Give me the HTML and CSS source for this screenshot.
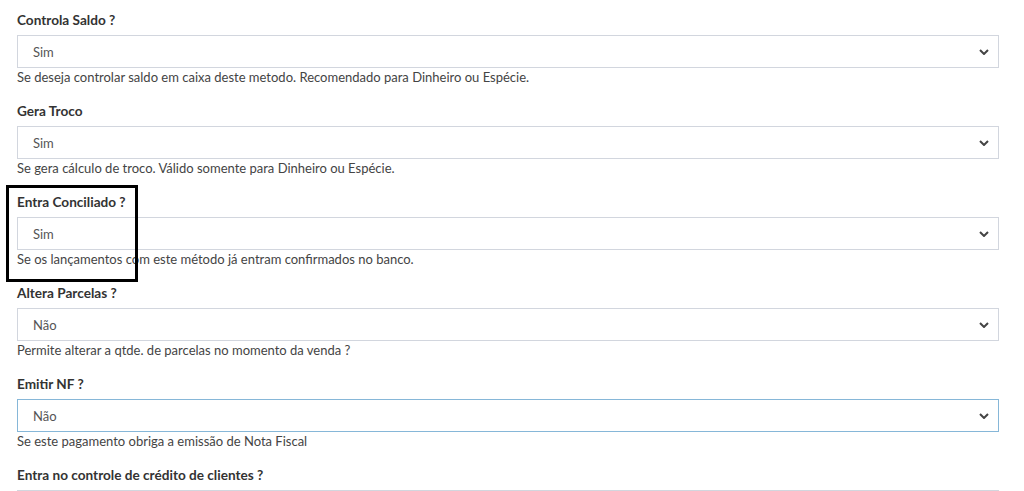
FILE: index.html
```html
<!DOCTYPE html>
<html lang="pt">
<head>
<meta charset="utf-8">
<title>Formulário</title>
<link rel="stylesheet" href="styles.css">
</head>
<body>
<div class="form">
  <div class="group">
    <label class="lbl">Controla Saldo ?</label>
    <div class="select"><span>Sim</span><svg class="chev" viewBox="0 0 10 6" width="10" height="6"><path d="M1 1 L5 5 L9 1" fill="none" stroke="#444" stroke-width="2"/></svg></div>
    <div class="help">Se deseja controlar saldo em caixa deste metodo. Recomendado para Dinheiro ou Espécie.</div>
  </div>
  <div class="group">
    <label class="lbl">Gera Troco</label>
    <div class="select"><span>Sim</span><svg class="chev" viewBox="0 0 10 6" width="10" height="6"><path d="M1 1 L5 5 L9 1" fill="none" stroke="#444" stroke-width="2"/></svg></div>
    <div class="help">Se gera cálculo de troco. Válido somente para Dinheiro ou Espécie.</div>
  </div>
  <div class="group">
    <label class="lbl">Entra Conciliado ?</label>
    <div class="select"><span>Sim</span><svg class="chev" viewBox="0 0 10 6" width="10" height="6"><path d="M1 1 L5 5 L9 1" fill="none" stroke="#444" stroke-width="2"/></svg></div>
    <div class="help">Se os lançamentos com este método já entram confirmados no banco.</div>
    <div class="highlight"></div>
  </div>
  <div class="group">
    <label class="lbl">Altera Parcelas ?</label>
    <div class="select"><span>Não</span><svg class="chev" viewBox="0 0 10 6" width="10" height="6"><path d="M1 1 L5 5 L9 1" fill="none" stroke="#444" stroke-width="2"/></svg></div>
    <div class="help">Permite alterar a qtde. de parcelas no momento da venda ?</div>
  </div>
  <div class="group">
    <label class="lbl">Emitir NF ?</label>
    <div class="select focus"><span>Não</span><svg class="chev" viewBox="0 0 10 6" width="10" height="6"><path d="M1 1 L5 5 L9 1" fill="none" stroke="#444" stroke-width="2"/></svg></div>
    <div class="help">Se este pagamento obriga a emissão de Nota Fiscal</div>
  </div>
  <div class="group">
    <label class="lbl">Entra no controle de crédito de clientes ?</label>
    <div class="select last"></div>
  </div>
</div>
</body>
</html>
```
FILE: styles.css
```css
html, body {
  margin: 0;
  padding: 0;
  background: #fff;
  overflow: hidden;
  height: 491px;
}
body {
  font-family: "Source Sans Pro", Lato, "Open Sans", sans-serif;
  font-size: 13px;
  color: #333;
}
.form {
  padding: 10px 25px 0 17px;
}
.group {
  position: relative;
  margin-bottom: 15px;
}
.lbl {
  display: block;
  font-weight: 700;
  font-size: 13.6px;
  line-height: 20px;
  margin-bottom: 5px;
  color: #333;
}
.select {
  height: 33px;
  box-sizing: border-box;
  border: 1px solid #d2d6de;
  display: flex;
  align-items: center;
  justify-content: space-between;
  padding: 0 9px 0 15px;
  color: #555;
  font-size: 13px;
}
.select.focus {
  border-color: #86b7d8;
}
.chev {
  display: block;
  margin-top: 1px;
}
.help {
  line-height: 18px;
  color: #444;
}
.highlight {
  position: absolute;
  left: -11px;
  top: -7px;
  width: 132px;
  height: 97px;
  box-sizing: border-box;
  border: 3px solid #000;
  pointer-events: none;
}
```
